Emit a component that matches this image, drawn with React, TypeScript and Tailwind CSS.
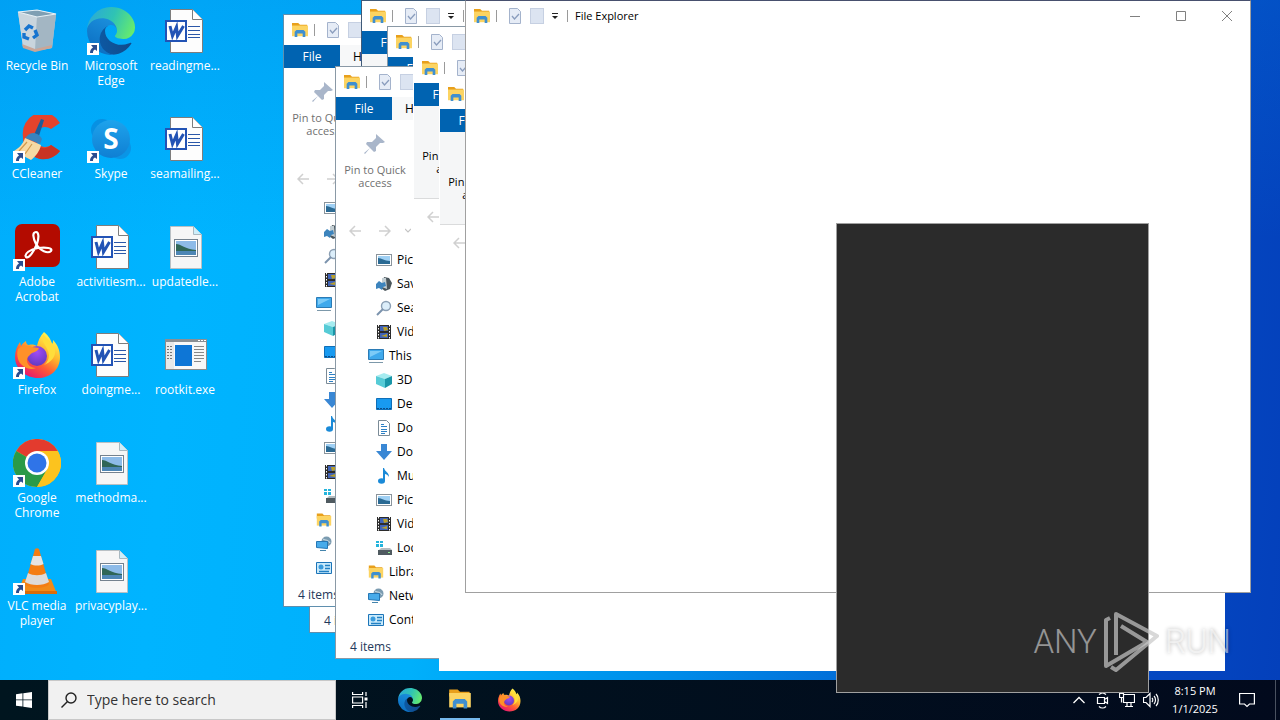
import type { ReactNode } from "react";
import clsx from "clsx";

function RecycleBinIcon() {
  return (
    <svg viewBox="0 0 48 48" className="w-12 h-12">
      <path d="M5 5 24 3l19 4-4 34-17 3-12-4z" fill="#b9cbd8" />
      <path d="M5 5l19 5-2 34-12-5z" fill="#c9d5dd" />
      <path d="M24 10l19-3-4 34-17 3z" fill="#a3b6c3" />
      <path d="M5 5 24 3l19 4-19 3z" fill="#7f9fb3" stroke="#e8f1f6" strokeWidth="1.2" />
      <path d="M9 37l13 5 17-4-.4 3L22 45l-12-4z" fill="#c9a698" />
      <g fill="none" stroke="#1674cf" strokeWidth="3.4">
        <path d="M12 23l4-4 4 2" />
        <path d="M22 23l2 5-4 3" />
        <path d="M16 32l-5-2v-4" />
      </g>
    </svg>
  );
}

function EdgeIcon({ className }: { className: string }) {
  return (
    <svg viewBox="0 0 256 256" className={className}>
      <defs>
        <linearGradient id="edgeDark" x1="0" x2="1" y1="0" y2="0">
          <stop offset="0" stopColor="#0c59a4" />
          <stop offset="1" stopColor="#114a8b" />
        </linearGradient>
        <linearGradient id="edgeMid" x1="0.6" x2="0.2" y1="0" y2="1">
          <stop offset="0" stopColor="#1b8fdc" />
          <stop offset="1" stopColor="#0a6cc0" />
        </linearGradient>
        <linearGradient id="edgeTop" x1="0" x2="1" y1="0.3" y2="0.6">
          <stop offset="0" stopColor="#2ba9d8" />
          <stop offset="0.5" stopColor="#2fc3b4" />
          <stop offset="1" stopColor="#66eb6e" />
        </linearGradient>
      </defs>
      <path
        fill="url(#edgeDark)"
        d="M231.07 190.54c-3.43 1.8-6.96 3.37-10.57 4.71a101.85 101.85 0 01-35.92 6.46c-47.31 0-88.54-32.54-88.54-74.31a31.47 31.47 0 0116.43-27.31c-42.8 1.8-53.8 46.4-53.8 72.54 0 74 68.1 81.4 82.8 81.4 7.9 0 19.8-2.3 27-4.6l1.3-.4a128.34 128.34 0 0066.6-52.8 4 4 0 00-5.3-5.6z"
      />
      <path
        fill="url(#edgeMid)"
        d="M105.73 241.42a79.2 79.2 0 01-22.74-21.34 80.72 80.72 0 0129.49-120c3.12-1.47 8.45-4.13 15.54-4a32.35 32.35 0 0125.69 13 31.88 31.88 0 016.36 18.66c0-.21 24.46-79.6-80-79.6-43.9 0-80 41.66-80 78.21a130.15 130.15 0 0012.11 56 128 128 0 00156.38 67.11 75.55 75.55 0 01-62.78-8z"
      />
      <path
        fill="url(#edgeTop)"
        d="M152.33 148.86c-.81 1.05-3.3 2.5-3.3 5.66 0 2.61 1.7 5.12 4.72 7.23 14.38 10 41.49 8.68 41.56 8.68a59.56 59.56 0 0030.27-8.35 61.38 61.38 0 0030.43-52.88c.26-22.41-8-37.31-11.34-43.91C223.46 23.82 177.72 0 128.01 0a128 128 0 00-128 126.2c.48-36.54 36.8-66.05 80-66.05 3.5 0 23.46.34 42 10.07 16.34 8.58 24.9 18.94 30.85 29.21 6.18 10.67 7.28 24.15 7.28 29.52 0 5.37-2.74 13.33-7.8 19.9z"
      />
    </svg>
  );
}

function FirefoxIcon({ className }: { className: string }) {
  return (
    <svg viewBox="0 0 48 48" className={className}>
      <defs>
        <linearGradient id="foxBody" x1="0.8" x2="0.25" y1="0.1" y2="0.95">
          <stop offset="0" stopColor="#fff44f" />
          <stop offset="0.35" stopColor="#ffb62d" />
          <stop offset="0.65" stopColor="#ff5a36" />
          <stop offset="1" stopColor="#e8196e" />
        </linearGradient>
        <radialGradient id="foxGlobe" cx="0.5" cy="0.3" r="0.8">
          <stop offset="0" stopColor="#a24bf5" />
          <stop offset="1" stopColor="#5a38b8" />
        </radialGradient>
      </defs>
      <path
        fill="url(#foxBody)"
        d="M31 1c5 4 7 8 8 12 1-1 1-2 1-4 5 5 7 11 7 17 0 13-10 21-22 21S2 38 2 26c0-6 2-11 5-15l1 4c1-2 3-4 5-5 0 2 1 4 3 4 3-1 6 0 8 1 1-5 3-10 7-14z"
      />
      <circle cx="24" cy="25" r="10" fill="url(#foxGlobe)" />
      <path
        fill="#ff9128"
        d="M5 18c4-4 10-4 14-2l7 1c-1 3-4 4-7 5-2 2-4 3-5 6-1 5 4 9 9 9-7 3-16-2-18-9-1-4-1-7 0-10z"
      />
      <path fill="#ffdd3b" d="M30 3c-3 8 5 12 6 21 0 4-2 8-5 10 7-3 12-8 11-15C41 11 34 9 30 3z" />
    </svg>
  );
}

function CCleanerIcon() {
  return (
    <svg viewBox="0 0 48 48" className="w-12 h-12">
      <path d="M47 8A20 21 0 0 0 10 22c0 12 9 22 20 22 7 0 13-3 17-8l-9-6a10 10 0 1 1 0-16z" fill="#e5432c" />
      <path d="M18 38c8 10 22 7 29-2l-9-6c-4 4-9 4-12 1z" fill="#c93424" />
      <path d="M28 4l3 1-6 19-5-2z" fill="#1d5c99" />
      <path d="M15 20c4-4 11-2 14 4l-2 5-15-6z" fill="#3a83bd" />
      <path d="M12 23l16 7c-1 6-6 12-10 15L1 36c5-3 9-7 11-13z" fill="#f5d9a4" />
      <path d="M6 36l8-9M12 39l7-10" stroke="#d19a4c" strokeWidth="1.2" />
    </svg>
  );
}

function SkypeIcon() {
  return (
    <svg viewBox="0 0 48 48" className="w-12 h-12">
      <defs>
        <linearGradient id="skypeFill" x1="0" x2="0" y1="0" y2="1">
          <stop offset="0" stopColor="#1ea3ec" />
          <stop offset="1" stopColor="#0f7fd3" />
        </linearGradient>
      </defs>
      <circle cx="15" cy="15" r="11" fill="#0791e3" />
      <circle cx="33" cy="33" r="11" fill="#0a95e6" />
      <circle cx="24" cy="24" r="19" fill="url(#skypeFill)" />
      <text x="24" y="34" textAnchor="middle" fontSize="28" fontWeight="700" fontFamily="Open Sans, sans-serif" fill="#fff">
        S
      </text>
    </svg>
  );
}

function AcrobatIcon() {
  return (
    <svg viewBox="0 0 48 48" className="w-12 h-12">
      <rect x="2" y="1" width="45" height="43" rx="7" fill="#b30b00" />
      <path
        d="M23 9c-4 0-3 6 0 12 4 7 12 10 15 7 2-3-5-4-13-3-8 1-14 6-12 9 3 2 8-6 11-13 2-6 2-12-1-12z"
        fill="none"
        stroke="#fff"
        strokeWidth="2.2"
      />
    </svg>
  );
}

function ChromeIcon() {
  return (
    <svg viewBox="0 0 48 48" className="w-12 h-12">
      <circle cx="24" cy="24" r="24" fill="#fcc31e" />
      <path d="M24 24 3.2 12A24 24 0 0 1 44.8 12z" fill="#e33b2e" />
      <path d="M24 24 3.2 12A24 24 0 0 0 24 48l10.400-18z" fill="#2a9a48" />
      <path d="M24 12h20.800A24 24 0 0 1 24 48l10.400-18z" fill="#fcc31e" />
      <circle cx="24" cy="24" r="12" fill="#fff" />
      <circle cx="24" cy="24" r="9.500" fill="#2f74e8" />
    </svg>
  );
}

function VlcIcon() {
  return (
    <svg viewBox="0 0 48 48" className="w-12 h-12">
      <path d="M10 32h28l6 15H4z" fill="#f28a18" />
      <path d="M4 44h40v3H4z" fill="#d96c0a" />
      <path d="M22 2c1-1 3-1 4 0l10 35c-3 5-21 5-24 0z" fill="#f47d12" />
      <path d="M20 9h8l2.500 8c-4 2-9 2-13 0z" fill="#e6e4e2" />
      <path d="M15 26c5 3 13 3 18 0l3 9c-6 4-18 4-24 0z" fill="#dedbd8" />
    </svg>
  );
}

function WordDocIcon() {
  return (
    <svg viewBox="0 0 48 48" className="w-12 h-12">
      <path d="M9.500 2.500h22l10 10v33h-32z" fill="#fdfdfd" stroke="#7d7d7d" />
      <path d="M31.500 2.500v10h10" fill="#fff" stroke="#7d7d7d" />
      <path d="M27 19.500h12M27 23.500h12M27 27.500h12M27 30.500h12" stroke="#2b57a8" />
      <rect x="5" y="14" width="20" height="20" fill="#fff" stroke="#2253b5" strokeWidth="2" />
      <path d="M9 19l2.500 10 4-9 1 9 6-10" fill="none" stroke="#2253b5" strokeWidth="3" />
    </svg>
  );
}

function PictureDocIcon() {
  return (
    <svg viewBox="0 0 48 48" className="w-12 h-12">
      <path d="M9.500 3.500h23l8 8v34h-31z" fill="#f6f6f6" stroke="#b9c0c4" />
      <path d="M32.500 3.500v8h8" fill="#cdeefa" stroke="#a9b8c0" />
      <rect x="13.500" y="16.500" width="23" height="17" fill="#fff" stroke="#75828f" />
      <path d="M15 18h20v14H15z" fill="#8dbbe8" />
      <path d="M15 21c5 0 9 5 20 6v2H15z" fill="#2f6657" />
      <path d="M15 28h20v4H15z" fill="#4d86b5" />
    </svg>
  );
}

function ExeIcon() {
  return (
    <svg viewBox="0 0 48 48" className="w-12 h-12">
      <rect x="4.500" y="8.500" width="41" height="30" fill="#f8f8f8" stroke="#8c8c8c" />
      <path d="M4 8h42v3H4z" fill="#8a8f94" />
      <path d="M37 9.500h2M40 9.500h2M43 9.500h2" stroke="#fff" />
      <path d="M5 11h8v27H5z" fill="#e9e9e9" />
      <rect x="14" y="14" width="17" height="21" fill="#0e76d6" />
      <path d="M6 15.500h6M6 18.500h6M6 21.500h6M6 24.500h6M6 27.500h6" stroke="#777" strokeDasharray="2 1" />
      <path d="M33 15.500h10M33 18.500h10M33 21.500h10M33 24.500h10M33 27.500h10M33 30.500h7" stroke="#888" />
    </svg>
  );
}

function FolderIcon({ className }: { className: string }) {
  return (
    <svg viewBox="0 0 20 18" className={className}>
      <path d="M1 1h7l2 2h8v4H1z" fill="#e8a01c" />
      <path d="M1 4h18v12H1z" fill="#fcd462" />
      <path d="M4 17v-6l2-2h8l2 2v6h-3v-4H7v4z" fill="#3f8fd0" />
    </svg>
  );
}

function CheckDocIcon() {
  return (
    <svg viewBox="0 0 14 16" className="w-3.5 h-4">
      <path d="M1.500 .5h8l3 3v12h-11z" fill="#e6ecf6" stroke="#a4b3cc" />
      <path d="M4 8l2.500 3L11 6" fill="none" stroke="#8a9dbd" strokeWidth="1.300" />
    </svg>
  );
}

function PinIcon() {
  return (
    <svg viewBox="0 0 22 22" className="w-[22px] h-[22px]">
      <path d="M12 1l9 8-2 1-3 0-4 4 0 4-2 1-4-4-5 6-1-1 6-5-4-4 1-2 5 0 4-4z" fill="#a9b6ca" />
    </svg>
  );
}

function NavArrow({ flip = false }: { flip?: boolean }) {
  return (
    <svg viewBox="0 0 12 12" className={clsx("w-3 h-3 shrink-0", flip && "rotate-180")}>
      <path d="M12 6H1M6 1L1 6l5 5" fill="none" stroke="#d0d0d0" strokeWidth="1.500" />
    </svg>
  );
}

const treeIcons: Record<string, ReactNode> = {
  pictures: (
    <>
      <rect x=".5" y="2.500" width="15" height="11" fill="#fff" stroke="#8a949c" />
      <path d="M2 4h12v8H2z" fill="#9fd0f4" />
      <path d="M2 6c4 0 6 3 12 3v3H2z" fill="#2a6a94" />
    </>
  ),
  games: (
    <>
      <path d="M8 1l5 1 3 5-2 6-5 2-4-3z" fill="#4a565c" />
      <path d="M6 2l4 0 1 11-5-2z" fill="#c3ced3" />
      <path d="M0 8l3-3 3 2 3-1 1 4-3 1-1 3-3-2-3 1z" fill="#3d84bd" />
    </>
  ),
  search: (
    <>
      <circle cx="10" cy="6" r="4.500" fill="#dceefa" stroke="#8b9fb4" strokeWidth="1.400" />
      <path d="M7 9l-6 6" stroke="#7b93ad" strokeWidth="2" />
    </>
  ),
  video: (
    <>
      <path d="M1 1h14v14H1z" fill="#2b2b2b" />
      <path d="M4 2h8v5H4zM4 9h8v5H4z" fill="#3f63b8" />
      <path d="M7 3h4l1 3-4 1zM5 12l6-2v3z" fill="#b9a02a" />
      <path d="M2.500 1v14M13.500 1v14" stroke="#fff" strokeDasharray="1.500 1.500" />
    </>
  ),
  pc: (
    <>
      <path d="M.5 1.500h15v10H.5z" fill="#3fa9ec" stroke="#2b7bb5" />
      <path d="M2 3h12L2 9z" fill="#7dcbf7" />
      <path d="M1 14.500h14" stroke="#7c98aa" />
    </>
  ),
  cube: (
    <>
      <path d="M0 4l8-3 8 3-7 3z" fill="#a6ecf0" />
      <path d="M0 4l9 3v9l-9-4z" fill="#56cbd6" />
      <path d="M9 7l7-3v8l-7 4z" fill="#1996a8" />
    </>
  ),
  desktop: (
    <>
      <path d="M.5 2.500h15v11H.5z" fill="#189af0" stroke="#0f6fb8" />
      <path d="M1 12.500h14" stroke="#0a4d8a" strokeDasharray="2 1" />
    </>
  ),
  doc: (
    <>
      <path d="M2.500 .5h8l3 3v12h-11z" fill="#fff" stroke="#7b8b97" />
      <path d="M5 4.500h3M5 6.500h6M5 9.500h6M5 11.500h6M5 13.500h4" stroke="#2d80c4" />
    </>
  ),
  download: <path d="M5 0h6v7h5l-8 9-8-9h5z" fill="#3987d4" />,
  music: (
    <>
      <path d="M8 0c1 4 5 4 5 9-1-2-3-3-4-3v7H7V0z" fill="#1a8ad8" />
      <ellipse cx="5.500" cy="13" rx="3.500" ry="2.700" fill="#1a8ad8" />
    </>
  ),
  disk: (
    <>
      <path d="M0 1h3v2H0zM4 1h3v2H4zM0 4h3v3H0zM4 4h3v3H4z" fill="#24b4dc" />
      <path d="M3 10l2-2h9l2 2z" fill="#b4bcc0" />
      <path d="M2 10h14v5H2z" fill="#4f5a60" />
      <path d="M12 12.500h2" stroke="#8ef08e" />
    </>
  ),
  network: (
    <>
      <circle cx="10.500" cy="5.500" r="5" fill="#7b9bb0" />
      <path d="M7 3c3 2 5 0 7 4" stroke="#cfe2ec" fill="none" />
      <path d="M.5 5.500h11v7l-11-1z" fill="#48abea" stroke="#2577b5" />
      <path d="M4 14.500h6" stroke="#4484ac" />
    </>
  ),
  control: (
    <>
      <path d="M.5 2.500h15v11H.5z" fill="#c9eafb" stroke="#1c74b8" />
      <circle cx="5" cy="7" r="2.500" fill="#3a9bdc" />
      <path d="M9 5.500h5M9 8.500h5M3 11.500h10" stroke="#2180c4" strokeWidth="1.400" />
    </>
  ),
};

const treeItems = [
  { label: "Pictures", icon: "pictures", child: true },
  { label: "Saved Games", icon: "games", child: true },
  { label: "Searches", icon: "search", child: true },
  { label: "Videos", icon: "video", child: true },
  { label: "This PC", icon: "pc", child: false },
  { label: "3D Objects", icon: "cube", child: true },
  { label: "Desktop", icon: "desktop", child: true },
  { label: "Documents", icon: "doc", child: true },
  { label: "Downloads", icon: "download", child: true },
  { label: "Music", icon: "music", child: true },
  { label: "Pictures", icon: "pictures", child: true },
  { label: "Videos", icon: "video", child: true },
  { label: "Local Disk (C:)", icon: "disk", child: true },
  { label: "Libraries", icon: "folder", child: false },
  { label: "Network", icon: "network", child: false },
  { label: "Control Panel", icon: "control", child: false },
];

interface ExplorerWindowProps {
  className: string;
  title?: string;
  tabs?: "file" | "all";
  ribbon?: "empty" | "active" | "disabled";
  tree?: "icons" | "labels";
  status?: string;
}

function ExplorerWindow({ className, title, tabs, ribbon, tree, status }: ExplorerWindowProps) {
  return (
    <section className={clsx("absolute flex flex-col w-[786px] h-[593px] bg-white overflow-hidden", className)}>
      <div className="flex items-center h-[30px] shrink-0 pl-[7px]">
        <FolderIcon className="w-[18px] h-4" />
        <span className="w-px h-3 ml-[5px] bg-[#9a9a9a]" />
        <span className="ml-[11px]">
          <CheckDocIcon />
        </span>
        <span className="w-3.5 h-4 ml-2 bg-[#dce4f1] border border-[#c6d0e2]" />
        <svg viewBox="0 0 8 8" className="w-2 h-2 ml-[7px]">
          <path d="M1 1.500h6" stroke="#222" />
          <path d="M1 4h6L4 7z" fill="#222" />
        </svg>
        <span className="w-px h-3 ml-2 bg-[#9a9a9a]" />
        {title && (
          <>
            <h1 className="ml-[7px] text-[11px] leading-4 text-black">{title}</h1>
            <div className="flex ml-auto">
              <button aria-label="Minimize" className="flex items-center justify-center w-[46px] h-7">
                <svg viewBox="0 0 10 10" className="w-2.5 h-2.5">
                  <path d="M0 5.500h10" stroke="#808080" />
                </svg>
              </button>
              <button aria-label="Maximize" className="flex items-center justify-center w-[46px] h-7">
                <svg viewBox="0 0 10 10" className="w-2.5 h-2.5">
                  <path d="M.5 .5h9v9h-9z" fill="none" stroke="#808080" />
                </svg>
              </button>
              <button aria-label="Close" className="flex items-center justify-center w-[46px] h-7">
                <svg viewBox="0 0 10 10" className="w-2.5 h-2.5">
                  <path d="M0 0l10 10M10 0L0 10" stroke="#808080" />
                </svg>
              </button>
            </div>
          </>
        )}
      </div>
      {tabs && (
        <div className="flex h-[23px] shrink-0 text-[12px] leading-[23px]">
          <button className="w-14 bg-[#0063b1] text-white">File</button>
          {tabs === "all" && <button className="w-[60px] bg-[#f7f8f9] text-black">Home</button>}
        </div>
      )}
      {ribbon && (
        <div
          className={clsx(
            "h-[93px] shrink-0 pt-3 pl-1",
            ribbon === "disabled" ? "bg-white" : "bg-[#f5f6f7] border-b border-[#dadbdc]",
          )}
        >
          {ribbon !== "empty" && (
            <button
              className={clsx(
                "flex flex-col items-center w-[70px] text-[11px] leading-[13px]",
                ribbon === "disabled" ? "text-[#707070]" : "text-black",
              )}
            >
              <span className={clsx("h-[31px] pt-px", ribbon === "active" && "invisible")}>
                <PinIcon />
              </span>
              Pin to Quick access
            </button>
          )}
        </div>
      )}
      {ribbon && ribbon !== "empty" && (
        <div className="flex items-center h-[35px] shrink-0 pl-[13px]">
          <NavArrow />
          <span className="ml-[18px]">
            <NavArrow flip />
          </span>
          <svg viewBox="0 0 6 6" className="w-1.5 h-1.5 ml-3.5">
            <path d="M0 1l3 3 3-3" fill="none" stroke="#c4c4c4" strokeWidth="1.200" />
          </svg>
        </div>
      )}
      {tree && (
        <ul className="shrink-0 text-[12px] leading-6 text-black">
          {treeItems.map((item, i) => (
            <li key={i} className={clsx("flex items-center gap-[5px] h-6", item.child ? "pl-10" : "pl-8")}>
              {item.icon === "folder" ? (
                <FolderIcon className="w-4 h-4" />
              ) : (
                <svg viewBox="0 0 16 16" className="w-4 h-4 shrink-0">
                  {treeIcons[item.icon]}
                </svg>
              )}
              {tree === "labels" && item.label}
            </li>
          ))}
        </ul>
      )}
      {status && <div className="mt-auto px-3.5 text-[12px] leading-[22px] text-[#1e395b]">{status}</div>}
    </section>
  );
}

interface Shortcut {
  label: string;
  icon: ReactNode;
  arrow?: boolean;
}

const shortcuts: Shortcut[] = [
  { label: "Recycle Bin", icon: <RecycleBinIcon /> },
  { label: "CCleaner", icon: <CCleanerIcon />, arrow: true },
  { label: "Adobe Acrobat", icon: <AcrobatIcon />, arrow: true },
  { label: "Firefox", icon: <FirefoxIcon className="w-12 h-12" />, arrow: true },
  { label: "Google Chrome", icon: <ChromeIcon />, arrow: true },
  { label: "VLC media player", icon: <VlcIcon />, arrow: true },
  { label: "Microsoft Edge", icon: <EdgeIcon className="w-12 h-12" />, arrow: true },
  { label: "Skype", icon: <SkypeIcon />, arrow: true },
  { label: "activitiesm...", icon: <WordDocIcon /> },
  { label: "doingme...", icon: <WordDocIcon /> },
  { label: "methodma...", icon: <PictureDocIcon /> },
  { label: "privacyplay...", icon: <PictureDocIcon /> },
  { label: "readingme...", icon: <WordDocIcon /> },
  { label: "seamailing...", icon: <WordDocIcon /> },
  { label: "updatedle...", icon: <PictureDocIcon /> },
  { label: "rootkit.exe", icon: <ExeIcon /> },
];

function DesktopShortcut({ label, icon, arrow }: Shortcut) {
  return (
    <button className="flex flex-col items-center justify-start px-0.5 pt-[7px] text-white">
      <span className="relative block w-12 h-12">
        {icon}
        {arrow && (
          <svg viewBox="0 0 12 12" className="absolute left-0 bottom-0 w-3 h-3">
            <path d="M0 0h12v12H0z" fill="#fff" />
            <path d="M4 2h6v6L8 6.500C6 7.500 6 8.500 6 10H3c0-3 1-4 3-5.500z" fill="#2a4d8f" />
          </svg>
        )}
      </span>
      <span className="mt-[3px] text-[12px] leading-[15px] text-center">{label}</span>
    </button>
  );
}

function Watermark() {
  return (
    <div className="absolute right-[49px] bottom-[47px] z-20 flex items-center gap-1.5 font-['Roboto',sans-serif] font-light text-[33px] leading-[62px] text-white/50 pointer-events-none">
      <span>ANY</span>
      <svg viewBox="0 0 56 62" className="w-14 h-[62px]" fill="none" stroke="#c8c8c8" strokeOpacity="0.7" strokeWidth="4" strokeLinejoin="round">
        <path d="M7 7L3 9v46l41-24-26-16" />
        <path d="M13 44V3l41 22-41 34-5-3" />
      </svg>
      <span className="[text-shadow:0_0_4px_rgba(0,0,0,0.3)]">RUN</span>
    </div>
  );
}

function Taskbar() {
  return (
    <footer className="flex items-stretch h-10 shrink-0 bg-linear-to-r from-[#00151f] to-[#020a1d] text-white">
      <button aria-label="Start" className="flex items-center justify-center w-12">
        <svg viewBox="0 0 16 16" className="w-4 h-4" fill="#fff">
          <path d="M0 2.200l6.500-.9v6.200H0zM7.300 1.200L16 0v7.500H7.300zM0 8.300h6.500v6.200L0 13.700zM7.300 8.300H16V16l-8.700-1.200z" />
        </svg>
      </button>
      <label className="flex items-center w-72 pl-3 bg-[#f1f1f1] border border-[#c8c8c8] text-[#222]">
        <svg viewBox="0 0 16 16" className="w-4 h-4 shrink-0" fill="none" stroke="#222" strokeWidth="1.400">
          <circle cx="10" cy="6" r="5" />
          <path d="M6.500 9.500L.5 15.500" />
        </svg>
        <input
          type="text"
          aria-label="Search"
          placeholder="Type here to search"
          className="flex-1 min-w-0 ml-2.5 bg-transparent text-[14px] leading-5 placeholder:text-[#333] outline-none"
        />
      </label>
      <button aria-label="Task View" className="flex items-center justify-center w-12">
        <svg viewBox="0 0 16 16" className="w-4 h-4" fill="none" stroke="#fff" strokeWidth="1.200">
          <path d="M.6 0v2.500h10V0M.6 16v-2.500h10V16M.6 5h10v6H.6zM14 0v4M14 10v6" />
          <path d="M12.500 5.500h3v3h-3z" fill="#fff" stroke="none" />
        </svg>
      </button>
      <button aria-label="Microsoft Edge" className="flex items-center justify-center w-[52px]">
        <EdgeIcon className="w-6 h-6" />
      </button>
      <button aria-label="File Explorer" className="flex flex-col items-center w-12">
        <span className="flex items-center flex-1">
          <FolderIcon className="w-6 h-[22px]" />
        </span>
        <span className="w-10 h-0.5 bg-[#76b9ed]" />
      </button>
      <button aria-label="Firefox" className="flex items-center justify-center w-[50px]">
        <FirefoxIcon className="w-6 h-6" />
      </button>
      <div className="flex items-center ml-auto">
        <button aria-label="Show hidden icons" className="flex justify-center w-6">
          <svg viewBox="0 0 12 12" className="w-3 h-3">
            <path d="M.5 9L6 3.500 11.500 9" fill="none" stroke="#fff" strokeWidth="1.300" />
          </svg>
        </button>
        <button aria-label="Meet Now" className="flex justify-center w-6">
          <svg viewBox="0 0 14 18" className="w-3.5 h-[18px]" fill="none" stroke="#fff" strokeWidth="1.200">
            <path d="M1.500 6.500h7v6h-7zM8.500 8.500l3-2v6l-3-2" />
            <path d="M3 3.500c2-2 5-2 7 0M3 15.500c2 2 5 2 7 0" />
          </svg>
        </button>
        <button aria-label="Network" className="flex justify-center w-6">
          <svg viewBox="0 0 16 16" className="w-4 h-4" fill="none" stroke="#fff" strokeWidth="1.200">
            <path d="M5 2.500h10.500v8H4.500V6M8 10.500v4M12 10.500v4M6 14.500h8" />
            <path d="M.5 1.500h4v4h-4zM2.500 5.500v5" />
          </svg>
        </button>
        <button aria-label="Volume" className="flex justify-center w-6">
          <svg viewBox="0 0 16 16" className="w-4 h-4" fill="none" stroke="#fff" strokeWidth="1.200">
            <path d="M.5 5.500H3l4-4v13l-4-4H.5z" />
            <path d="M9 6c1 1 1 3 0 4M11 4c2 2 2 6 0 8M13 2c3 3 3 9 0 12" />
          </svg>
        </button>
        <button className="w-16 text-[11px] leading-[18px] text-center">
          <span className="block">8:15 PM</span>
          <span className="block">1/1/2025</span>
        </button>
        <button aria-label="Notifications" className="flex justify-center w-10">
          <svg viewBox="0 0 16 16" className="w-4 h-4" fill="none" stroke="#fff" strokeWidth="1.200">
            <path d="M.6 1.500h14.800v10.500H10.500L8 14.500 5.500 12H.6z" />
          </svg>
        </button>
        <span className="self-stretch w-px ml-2 mr-1 bg-[#4a5260]" />
      </div>
    </footer>
  );
}

export default function App() {
  return (
    <div className="relative flex flex-col min-h-screen overflow-hidden font-['Open_Sans','Noto_Sans',sans-serif]">
      <main className="relative flex-1 bg-[linear-gradient(180deg,rgba(0,120,220,0.25)_0%,transparent_35%),linear-gradient(95deg,#00aefc_0%,#00b4ff_15%,#00b0fb_35%,#008be8_55%,#0450c8_80%,#0440bb_100%)]">
        <div className="grid grid-flow-col grid-rows-[repeat(6,108px)] auto-cols-[74px]">
          {shortcuts.map((s) => (
            <DesktopShortcut key={s.label} {...s} />
          ))}
        </div>
        <ExplorerWindow status="4 items" className="left-[309px] top-[40px] border border-[#5f8fae]" />
        <ExplorerWindow
          tabs="all"
          ribbon="disabled"
          tree="icons"
          status="4 items"
          className="left-[283px] top-[14px] border border-[#5f8fae]"
        />
        <ExplorerWindow tabs="file" ribbon="empty" className="left-[361px] top-0 border border-[#3f5a78]" />
        <ExplorerWindow tabs="file" ribbon="empty" className="left-[387px] top-[26px] border border-[#8a99a6]" />
        <ExplorerWindow
          tabs="all"
          ribbon="disabled"
          tree="labels"
          status="4 items"
          className="left-[335px] top-[66px] border border-[#8a99a6]"
        />
        <ExplorerWindow tabs="file" ribbon="active" className="left-[413px] top-[52px] border border-white" />
        <ExplorerWindow tabs="file" ribbon="active" className="left-[439px] top-[78px] border border-white" />
        <ExplorerWindow title="File Explorer" className="left-[465px] top-0 border border-[#a0a0a0] border-t-[#47506e]" />
      </main>
      <Taskbar />
      <div className="absolute left-[836px] top-[223px] z-10 w-[313px] h-[470px] bg-[#2b2b2b] border border-[#a0a0a0]" />
      <Watermark />
    </div>
  );
}
